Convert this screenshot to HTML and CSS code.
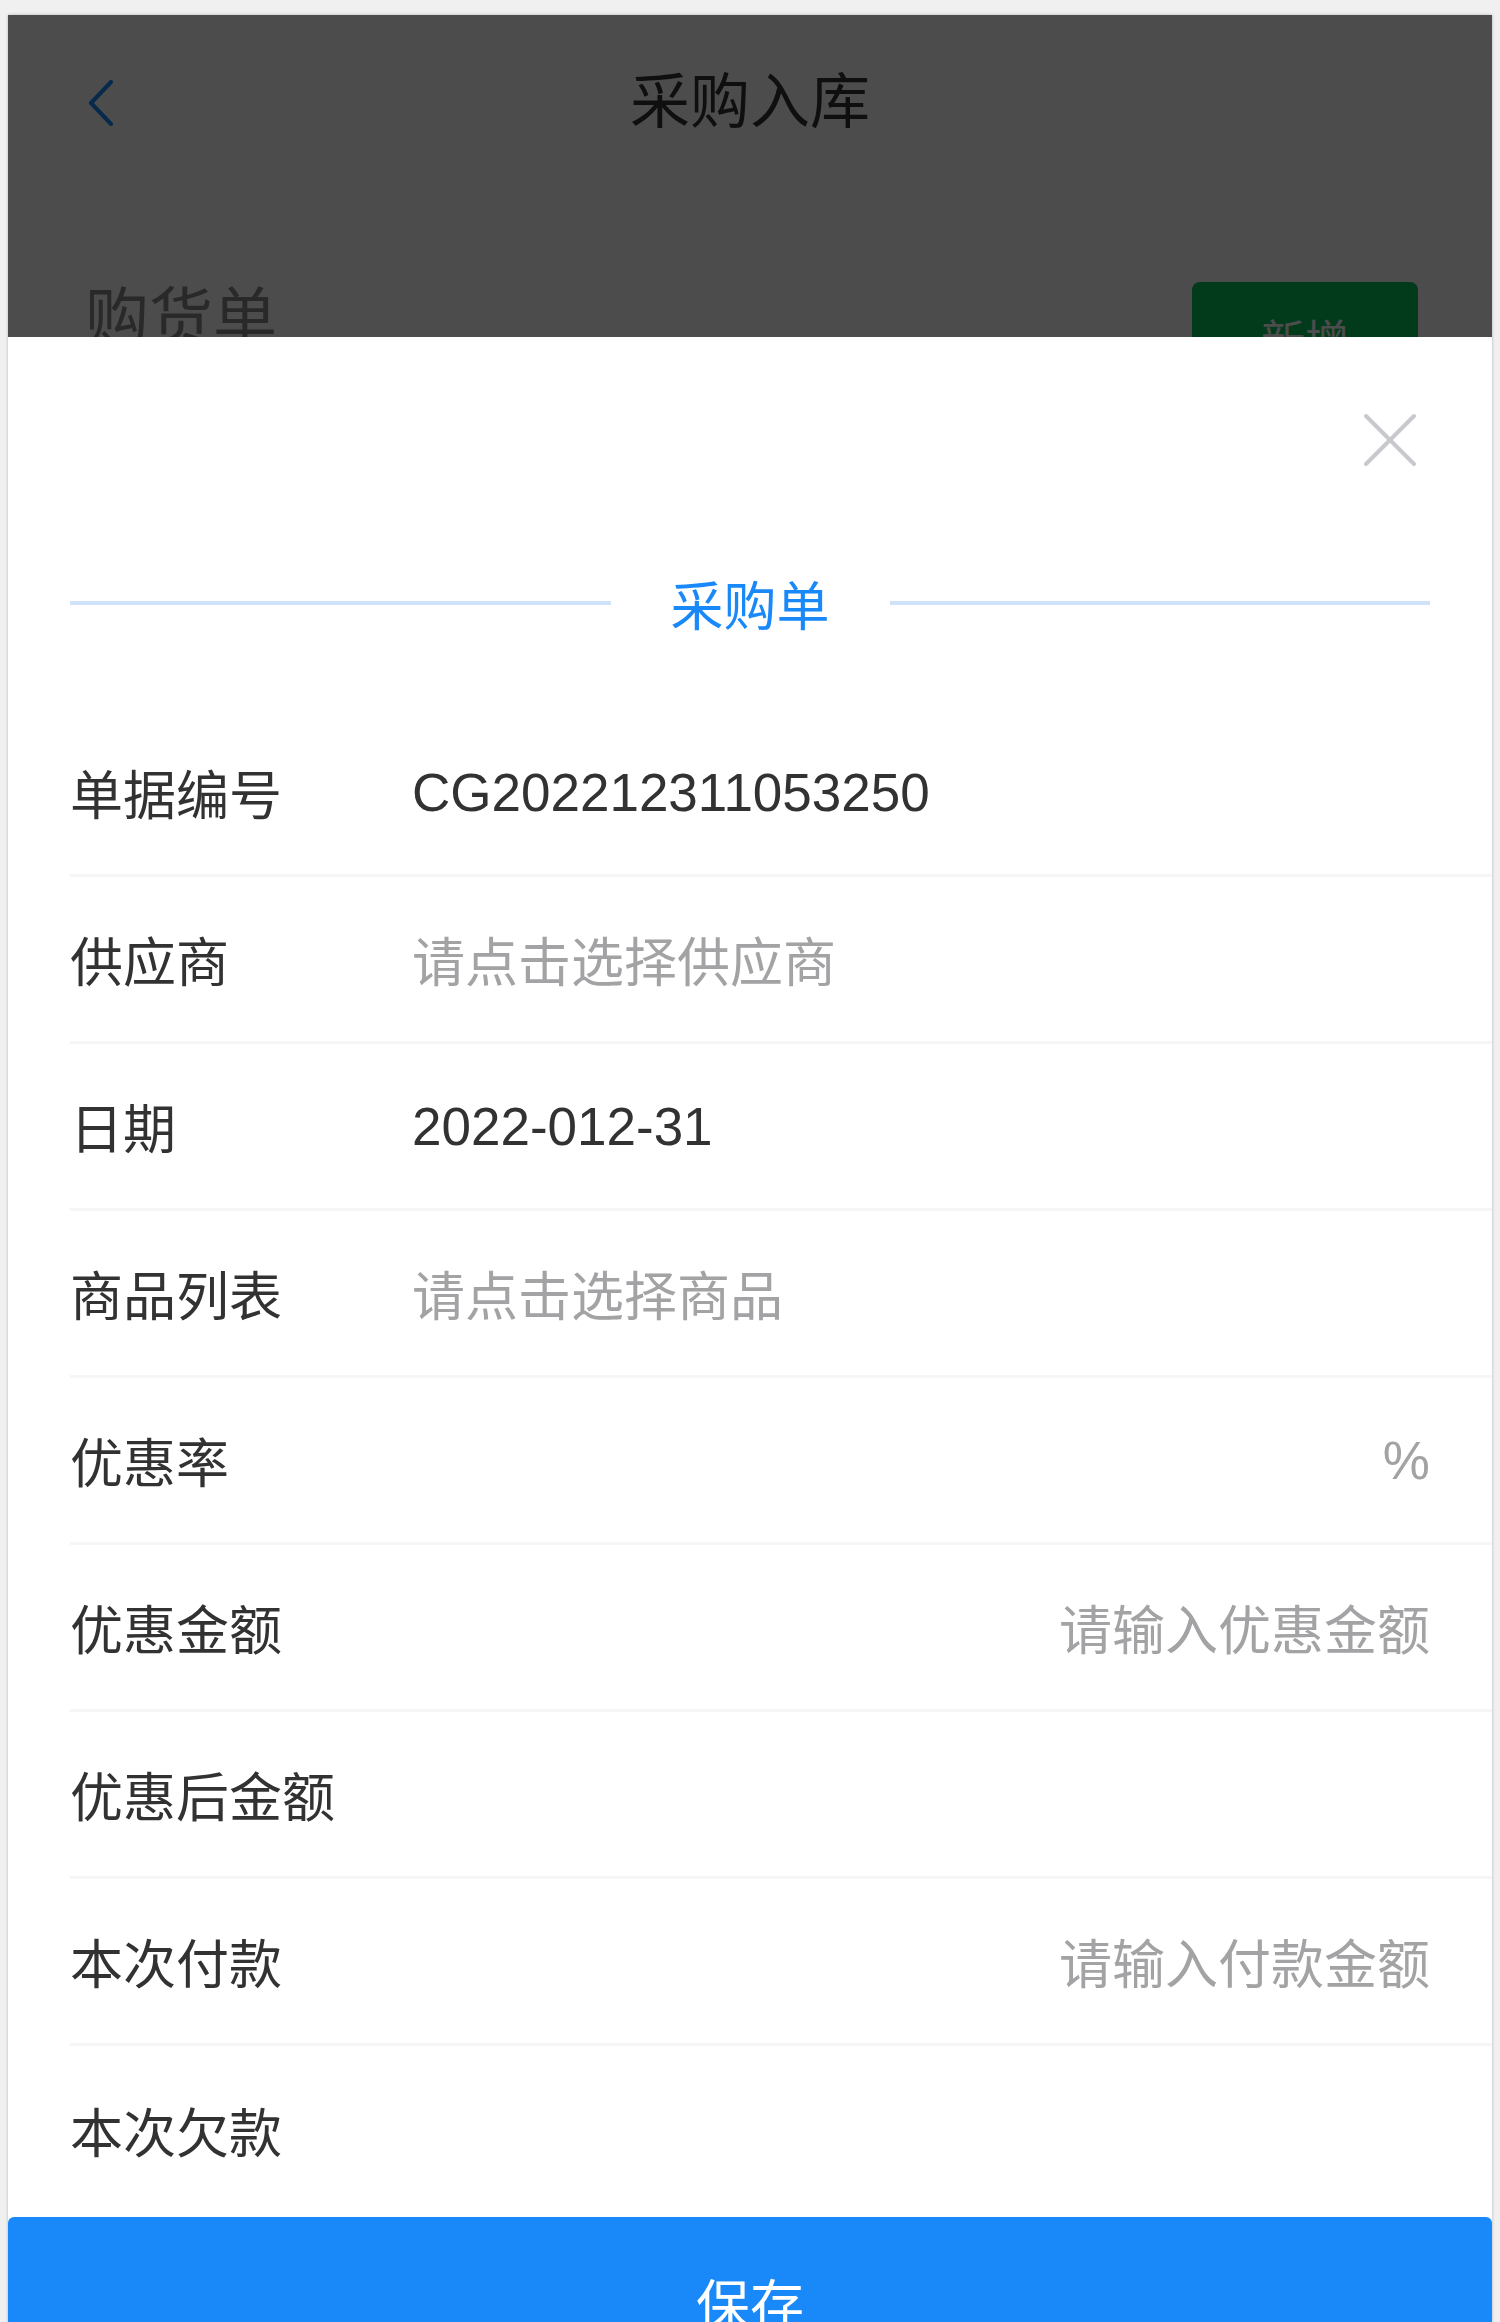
FILE: index.html
```html
<!DOCTYPE html>
<html lang="zh-CN">
<head>
  <meta charset="UTF-8" />
  <meta name="viewport" content="width=device-width, initial-scale=1.0"/>
  <title>采购入库</title>
  <link rel="stylesheet" href="styles.css">
</head>
<body>
  <div class="screen">

    <!-- Page under the popup -->
    <div class="page">
      <div class="nav-bar">
        <span class="nav-back">
          <svg width="26" height="46" viewBox="0 0 26 46">
            <polyline points="23,2 3,23 23,44" fill="none" stroke="#1989fa" stroke-width="4" stroke-linecap="round" stroke-linejoin="round"/>
          </svg>
        </span>
        <span class="nav-title">采购入库</span>
        <span></span>
      </div>
      <div class="section-head">
        <span class="section-title">购货单</span>
        <button type="button" class="add-btn">新增</button>
      </div>
    </div>

    <div class="overlay"></div>

    <!-- Bottom popup: purchase order form -->
    <div class="popup">
      <button type="button" class="popup-close">
        <svg width="56" height="56" viewBox="0 0 56 56">
          <line x1="4" y1="4" x2="52" y2="52" stroke="#c8c9cc" stroke-width="4" stroke-linecap="round"/>
          <line x1="52" y1="4" x2="4" y2="52" stroke="#c8c9cc" stroke-width="4" stroke-linecap="round"/>
        </svg>
      </button>

      <div class="divider"><span>采购单</span></div>

      <div class="field">
        <span class="field-label">单据编号</span>
        <span class="field-value">CG202212311053250</span>
      </div>
      <div class="field">
        <span class="field-label">供应商</span>
        <span class="field-value placeholder">请点击选择供应商</span>
      </div>
      <div class="field">
        <span class="field-label">日期</span>
        <span class="field-value">2022-012-31</span>
      </div>
      <div class="field">
        <span class="field-label">商品列表</span>
        <span class="field-value placeholder">请点击选择商品</span>
      </div>
      <div class="field">
        <span class="field-label">优惠率</span>
        <span class="field-value"></span>
        <span class="field-unit">%</span>
      </div>
      <div class="field">
        <span class="field-label">优惠金额</span>
        <span class="field-value placeholder right">请输入优惠金额</span>
      </div>
      <div class="field">
        <span class="field-label">优惠后金额</span>
        <span class="field-value"></span>
      </div>
      <div class="field">
        <span class="field-label">本次付款</span>
        <span class="field-value placeholder right">请输入付款金额</span>
      </div>
      <div class="field last">
        <span class="field-label">本次欠款</span>
        <span class="field-value"></span>
      </div>

      <button type="button" class="save-btn">保存</button>
    </div>

  </div>
</body>
</html>
```

FILE: styles.css
```css
body, html {
  margin: 0;
  padding: 0;
  background-color: #f0f0f0;
  font-family: "Liberation Sans", "Noto Sans CJK SC", sans-serif;
}

.screen {
  position: relative;
  margin: 15px 8px 0 8px;
  height: 2307px;
  overflow: hidden;
  background-color: #fff;
  box-shadow: 0 0 3px rgba(0, 0, 0, 0.25);
}

/* page under the popup */
.nav-bar {
  display: grid;
  grid-template-columns: 1fr auto 1fr;
  align-items: center;
  height: 163px;
}

.nav-back {
  display: flex;
  align-items: center;
  padding-left: 80px;
  padding-top: 12px;
}

.nav-title {
  font-size: 60px;
  color: #323233;
}

.section-head {
  display: flex;
  justify-content: space-between;
  align-items: flex-start;
  padding: 101px 74px 0 77px;
}

.section-title {
  margin-top: 4px;
  font-size: 64px;
  line-height: 70px;
  color: #8a8a8a;
}

.add-btn {
  width: 226px;
  height: 111px;
  margin-top: 3px;
  border: none;
  border-radius: 8px;
  background-color: #07c160;
  color: #fff;
  font-family: inherit;
  font-size: 44px;
}

.overlay {
  position: absolute;
  inset: 0;
  background-color: rgba(0, 0, 0, 0.7);
}

/* popup */
.popup {
  position: absolute;
  top: 322px;
  left: 0;
  right: 0;
  padding-top: 236px;
  background-color: #fff;
}

.popup-close {
  position: absolute;
  top: 75px;
  right: 74px;
  padding: 0;
  border: none;
  background: none;
  line-height: 0;
}

.divider {
  display: flex;
  align-items: center;
  gap: 60px;
  height: 60px;
  padding: 0 62px;
  margin-bottom: 77px;
  font-size: 53px;
  color: #1989fa;
}

.divider::before,
.divider::after {
  content: "";
  flex: 1;
  height: 4px;
  background-color: #cfe2f9;
}

.field {
  display: flex;
  align-items: center;
  height: 167px;
  box-sizing: border-box;
  margin-left: 62px;
  padding-right: 62px;
  border-bottom: 3px solid #f6f6f7;
  font-size: 53px;
  color: #323233;
}

.field.last {
  border-bottom: none;
}

.field-label {
  flex: none;
  width: 342px;
}

.field-value {
  flex: 1;
  white-space: nowrap;
}

.field-value.placeholder {
  color: #a3a3a5;
}

.field-value.right {
  text-align: right;
}

.field-unit {
  color: #a3a3a5;
}

.save-btn {
  display: block;
  width: 100%;
  height: 168px;
  margin-top: 4px;
  border: none;
  border-radius: 6px 6px 0 0;
  background-color: #1989fa;
  color: #fff;
  font-family: inherit;
  font-size: 54px;
}
```
